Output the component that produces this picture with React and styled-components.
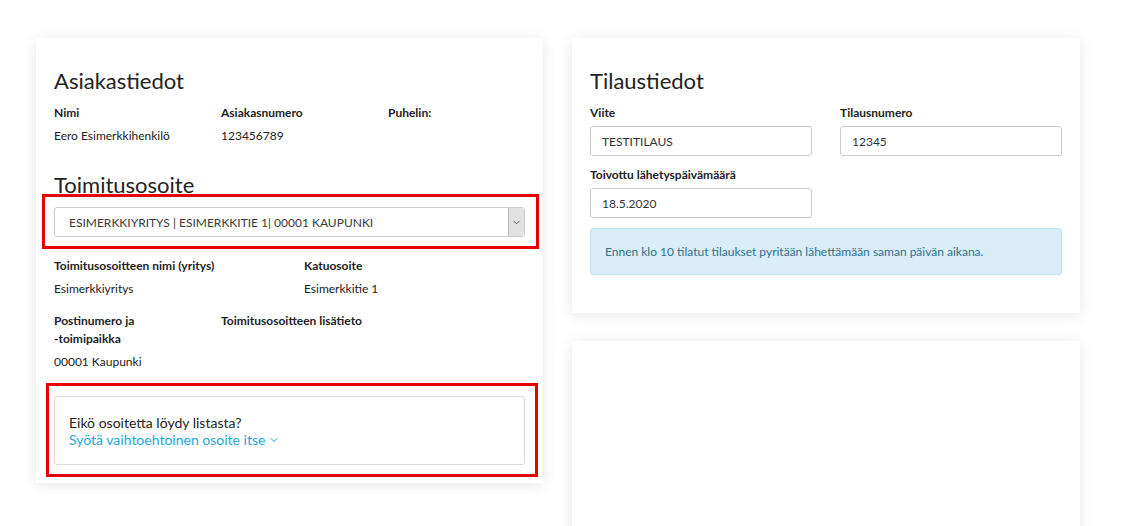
import styled, { createGlobalStyle } from 'styled-components'
import { ChevronDown } from 'lucide-react'

const GlobalStyle = createGlobalStyle`
  html, body {
    margin: 0;
    padding: 0;
    background: #fff;
    font-family: Lato, 'Open Sans', sans-serif;
    color: #222;
  }
`

export default function App() {
  return (
    <Page>
      <GlobalStyle />
      <Column>
        <Card>
          <Heading>Asiakastiedot</Heading>
          <InfoGrid>
            <Field>
              <Label>Nimi</Label>
              <Value>Eero Esimerkkihenkilö</Value>
            </Field>
            <Field>
              <Label>Asiakasnumero</Label>
              <Value>123456789</Value>
            </Field>
            <Field>
              <Label>Puhelin:</Label>
            </Field>
          </InfoGrid>

          <Heading $top={25}>Toimitusosoite</Heading>
          <SelectFrame>
            <Select>
              <SelectText>ESIMERKKIYRITYS | ESIMERKKITIE 1| 00001 KAUPUNKI</SelectText>
              <SelectArrow>
                <ChevronDown size={11} strokeWidth={2} />
              </SelectArrow>
            </Select>
          </SelectFrame>

          <HalfGrid>
            <Field>
              <Label>Toimitusosoitteen nimi (yritys)</Label>
              <Value>Esimerkkiyritys</Value>
            </Field>
            <Field>
              <Label>Katuosoite</Label>
              <Value>Esimerkkitie 1</Value>
            </Field>
          </HalfGrid>

          <InfoGrid $top={14}>
            <Field>
              <Label>
                Postinumero ja
                <br />
                -toimipaikka
              </Label>
              <Value>00001 Kaupunki</Value>
            </Field>
            <Field>
              <Label>Toimitusosoitteen lisätieto</Label>
            </Field>
          </InfoGrid>

          <AltFrame>
            <AltBox>
              <AltTitle>Eikö osoitetta löydy listasta?</AltTitle>
              <AltLink>
                Syötä vaihtoehtoinen osoite itse
                <ChevronDown size={12} strokeWidth={2} />
              </AltLink>
            </AltBox>
          </AltFrame>
        </Card>
      </Column>

      <Column>
        <Card>
          <Heading>Tilaustiedot</Heading>
          <HalfGrid $top={0}>
            <Field>
              <Label>Viite</Label>
              <Input>TESTITILAUS</Input>
            </Field>
            <Field>
              <Label>Tilausnumero</Label>
              <Input>12345</Input>
            </Field>
          </HalfGrid>
          <HalfGrid $top={10}>
            <Field>
              <Label>Toivottu lähetyspäivämäärä</Label>
              <Input>18.5.2020</Input>
            </Field>
          </HalfGrid>
          <Alert>Ennen klo 10 tilatut tilaukset pyritään lähettämään saman päivän aikana.</Alert>
        </Card>
        <EmptyCard />
      </Column>
    </Page>
  )
}

const Page = styled.div`
  display: flex;
  align-items: flex-start;
  gap: 29px;
  padding: 38px 0 0 36px;
  height: 526px;
  box-sizing: border-box;
  overflow: hidden;
`

const Column = styled.div`
  width: 508px;
  display: flex;
  flex-direction: column;
  gap: 28px;
  &:first-child {
    width: 507px;
  }
`

const Card = styled.div`
  background: #fff;
  box-shadow: 0 2px 14px rgba(0, 0, 0, 0.1);
  padding: 28px 18px 18px;
`

const EmptyCard = styled.div`
  background: #fff;
  box-shadow: 0 2px 14px rgba(0, 0, 0, 0.1);
  height: 300px;
`

const Heading = styled.h2`
  margin: ${({ $top }) => $top || 0}px 0 8px;
  font-size: 22px;
  line-height: 30px;
  font-weight: 400;
  color: #222;
`

const InfoGrid = styled.div`
  display: grid;
  grid-template-columns: 167px 167px 1fr;
  margin-top: ${({ $top }) => $top || 0}px;
`

const HalfGrid = styled.div`
  display: grid;
  grid-template-columns: 222px 222px;
  column-gap: 28px;
  margin-top: ${({ $top }) => ($top === undefined ? 20 : $top)}px;
`

const Field = styled.div`
  display: flex;
  flex-direction: column;
`

const Label = styled.div`
  font-size: 12px;
  line-height: 18px;
  font-weight: 700;
  color: #222;
  margin-bottom: 5px;
  white-space: nowrap;
`

const Value = styled.div`
  font-size: 12px;
  line-height: 18px;
  color: #222;
`

/* red annotation frames drawn around the highlighted parts */
const SelectFrame = styled.div`
  border: 3px solid #e60000;
  margin: -14px -14px -12px -12px;
  padding: 10px 11px 9px 9px;
`

const AltFrame = styled.div`
  border: 3px solid #e60000;
  margin: 12px -13px -12px -8px;
  padding: 10px 10px 9px 5px;
`

const Select = styled.div`
  display: flex;
  align-items: stretch;
  height: 30px;
  box-sizing: border-box;
  border: 1px solid #ccc;
  border-radius: 3px;
`

const SelectText = styled.div`
  flex: 1;
  display: flex;
  align-items: center;
  padding-left: 14px;
  font-size: 12px;
  color: #3a3a3a;
`

const SelectArrow = styled.div`
  width: 15px;
  display: flex;
  align-items: center;
  justify-content: center;
  background: #e2e2e2;
  border-left: 1px solid #bbb;
  color: #555;
`

const AltBox = styled.div`
  border: 1px solid #ddd;
  border-radius: 3px;
  padding: 17px 14px 16px;
`

const AltTitle = styled.div`
  font-size: 14px;
  line-height: 17px;
  color: #222;
`

const AltLink = styled.div`
  display: flex;
  align-items: center;
  gap: 3px;
  font-size: 14px;
  line-height: 17px;
  color: #1ba8db;
`

const Input = styled.div`
  height: 30px;
  box-sizing: border-box;
  border: 1px solid #ccc;
  border-radius: 3px;
  display: flex;
  align-items: center;
  padding-left: 11px;
  font-size: 12px;
  color: #333;
  margin-top: -1px;
`

const Alert = styled.div`
  margin-top: 10px;
  background: #d9edf7;
  border: 1px solid #bce8f1;
  border-radius: 3px;
  padding: 15px 14px;
  font-size: 12px;
  line-height: 15px;
  color: #31708f;
  margin-bottom: 20px;
`
